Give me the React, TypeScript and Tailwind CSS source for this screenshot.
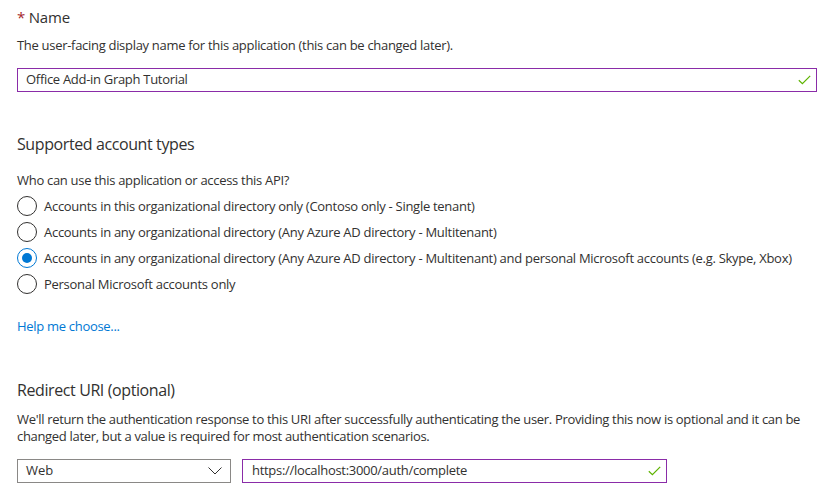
import React from "react";

const TEXT = "text-[#323130]";

function Check() {
  return (
    <svg width="13" height="10" viewBox="0 0 13 10" fill="none" className="shrink-0">
      <path d="M0.8 5.2 L4.4 8.6 L12.2 0.8" stroke="#5db300" strokeWidth="1.2" />
    </svg>
  );
}

function Radio({ label, checked = false }: { label: string; checked?: boolean }) {
  return (
    <div className="flex items-center h-[26px]">
      <span
        className={`w-[20px] h-[20px] rounded-full border flex items-center justify-center shrink-0 ${
          checked ? "border-[#0078d4]" : "border-[#323130]"
        }`}
      >
        {checked && <span className="w-[10px] h-[10px] rounded-full bg-[#0078d4]" />}
      </span>
      <span className="ml-[7px] text-[13px] leading-[18px] whitespace-nowrap tracking-[-0.28px]">{label}</span>
    </div>
  );
}

export default function App() {
  return (
    <div
      className={`w-[828px] h-[498px] bg-white overflow-hidden pl-[17px] pt-[6px] ${TEXT}`}
      style={{ fontFamily: '"Open Sans", "Noto Sans", sans-serif' }}
    >
      {/* Name */}
      <div className="h-[22px] leading-[22px] text-[15px] tracking-[-0.2px]">
        <span className="text-[#a4262c]">*</span> Name
      </div>
      <p className="mt-[8px] text-[13px] leading-[18px] whitespace-nowrap tracking-[-0.3px]">
        The user-facing display name for this application (this can be changed later).
      </p>
      <div className="mt-[14px] w-[800px] h-[24px] border border-[#8a2ca8] flex items-center pl-[8px] pr-[5px]">
        <span className="flex-1 text-[13px] tracking-[-0.3px]">Office Add-in Graph Tutorial</span>
        <Check />
      </div>

      {/* Supported account types */}
      <div className="mt-[41px] h-[22px] leading-[22px] text-[16px] tracking-[-0.4px]">Supported account types</div>
      <p className="mt-[16px] text-[13px] leading-[18px] tracking-[-0.3px]">Who can use this application or access this API?</p>
      <div className="mt-[4px] flex flex-col">
        <Radio label="Accounts in this organizational directory only (Contoso only - Single tenant)" />
        <Radio label="Accounts in any organizational directory (Any Azure AD directory - Multitenant)" />
        <Radio
          checked
          label="Accounts in any organizational directory (Any Azure AD directory - Multitenant) and personal Microsoft accounts (e.g. Skype, Xbox)"
        />
        <Radio label="Personal Microsoft accounts only" />
      </div>
      <a className="block mt-[20px] text-[13px] leading-[18px] text-[#0078d4] tracking-[-0.3px]">Help me choose...</a>

      {/* Redirect URI */}
      <div className="mt-[44px] h-[22px] leading-[22px] text-[16px] tracking-[-0.4px]">Redirect URI (optional)</div>
      <p className="mt-[10px] text-[13px] leading-[17px] whitespace-nowrap tracking-[-0.32px]">
        We'll return the authentication response to this URI after successfully authenticating the user. Providing this now is optional and it can be
        <br />
        changed later, but a value is required for most authentication scenarios.
      </p>
      <div className="mt-[14px] flex gap-[11px]">
        <div className="w-[214px] h-[24px] border border-[#8a8886] flex items-center pl-[8px] pr-[8px]">
          <span className="flex-1 text-[13px]">Web</span>
          <svg width="14" height="8" viewBox="0 0 14 8" fill="none">
            <path d="M0.5 0.5 L7 7 L13.5 0.5" stroke="#323130" strokeWidth="1" />
          </svg>
        </div>
        <div className="w-[425px] h-[24px] border border-[#8a2ca8] flex items-center pl-[9px] pr-[5px]">
          <span className="flex-1 text-[13px] tracking-[-0.3px]">https://localhost:3000/auth/complete</span>
          <Check />
        </div>
      </div>
    </div>
  );
}
